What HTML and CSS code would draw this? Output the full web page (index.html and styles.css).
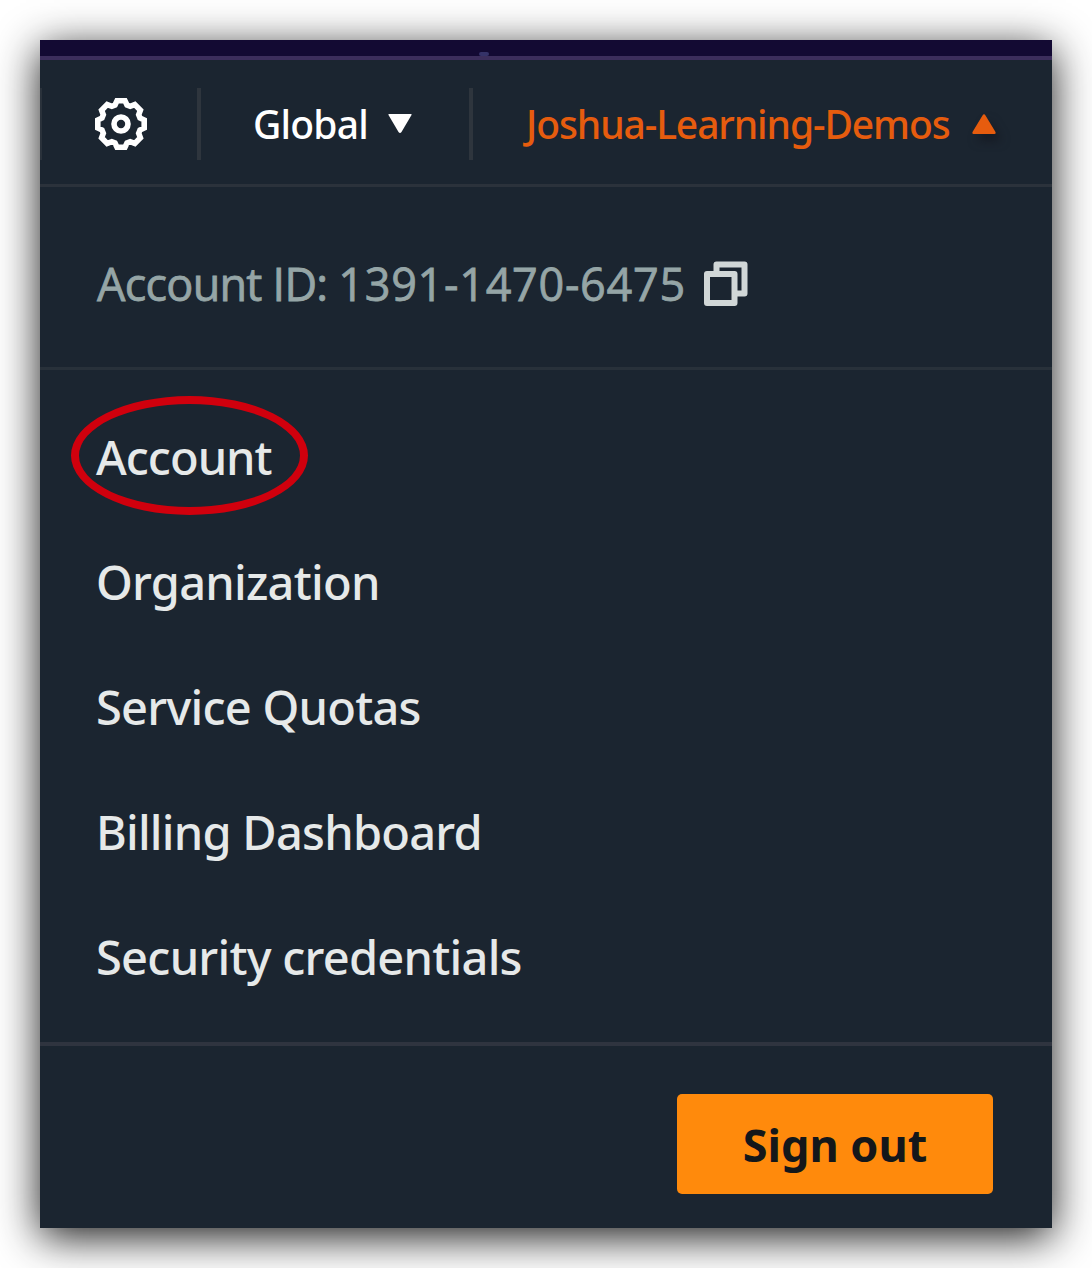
FILE: index.html
```html
<!DOCTYPE html>
<html lang="en">
<head>
<meta charset="utf-8">
<title>Account menu</title>
<link rel="stylesheet" href="styles.css">
</head>
<body>
<main class="panel">
  <div class="banner"><i class="star"></i></div>
  <header class="topbar">
    <button class="settings" aria-label="Settings">
      <svg width="54" height="54" viewBox="-27 -27 54 54" fill="none" stroke="#fff" stroke-width="5.6">
        <path d="M-4-23.2H4L6-19 9.2-17.7 13.8-19.4 19.4-13.8 17.7-9.2 19-6 23.2-4V4L19 6 17.7 9.2 19.4 13.8 13.8 19.4 9.2 17.7 6 19 4 23.2H-4L-6 19-9.2 17.7-13.8 19.4-19.4 13.8-17.7 9.2-19 6-23.2 4V-4L-19-6-17.7-9.2-19.4-13.8-13.8-19.4-9.2-17.7-6-19Z"/>
        <circle r="7"/>
      </svg>
    </button>
    <button class="region"><span class="region-name">Global</span>
      <svg width="24" height="20" viewBox="0 0 24 20"><path d="M1 0H23Q24 0 23.5 1L13.5 18Q12 20 10.500 18L.5 1Q0 0 1 0Z" fill="#fff"/></svg>
    </button>
    <button class="user"><span class="user-name">Joshua-Learning-Demos</span>
      <svg class="caret-up" width="24" height="20" viewBox="0 0 24 20"><path d="M1.500 20H22.500Q24 20 23.500 18L13.500 1.500Q12-1 10.500 1.500L.5 18Q0 20 1.500 20Z" fill="#e65c0e"/></svg>
    </button>
  </header>
  <section class="account-id">
    <span class="id-text">Account ID: <span class="id-number">1391-1470-6475</span></span>
    <svg width="46" height="48" viewBox="0 0 46 48" fill="none" stroke="#d1d7d7" stroke-width="6" stroke-linejoin="round"><path d="M4 14H31.500V43H4ZM13.500 14V4.500H41.500V33.500H31.500"/></svg>
  </section>
  <nav class="menu">
    <a class="item marked">Account</a>
    <a class="item">Organization</a>
    <a class="item">Service Quotas</a>
    <a class="item">Billing Dashboard</a>
    <a class="item">Security credentials</a>
  </nav>
  <footer class="footer"><button class="signout">Sign out</button></footer>
</main>
</body>
</html>
```
FILE: styles.css
```css
*, *::before { box-sizing: border-box; }
body {
  margin: 0;
  padding: 40px;
  height: 1268px;
  overflow: hidden;
  background: #fff;
  font-family: "Noto Sans", "Open Sans", sans-serif;
}
button {
  border: 0;
  padding: 0;
  margin: 0;
  background: none;
  font: inherit;
  color: inherit;
}
svg { display: block; flex: none; }
span { white-space: nowrap; }
.panel {
  width: 1012px;
  height: 1188px;
  display: flex;
  flex-direction: column;
  background: #1b2530;
  box-shadow: 0 9px 40px rgba(0, 0, 0, .9);
}
.banner {
  height: 20px;
  padding: 12px 0 0 439px;
  background: #130a33;
  border-bottom: 4px solid #3c2e5c;
}
.star {
  display: block;
  width: 10px;
  height: 4px;
  border-radius: 2px;
  background: #353268;
}
.topbar {
  height: 127px;
  padding-top: 4px;
  display: flex;
  align-items: center;
  border-bottom: 3px solid #2b323b;
  font-size: 39px;
  line-height: 48px;
  color: #fff;
}
.settings, .region {
  height: 72px;
  display: flex;
  align-items: center;
  border-right: 4px solid #2e353d;
}
.settings {
  width: 161px;
  padding-left: 52px;
  border-left: 2px solid #2a323b;
}
.region {
  width: 272px;
  padding-left: 52px;
  gap: 21px;
  font-weight: 500;
}
.region-name { width: 114px; letter-spacing: -.8px; text-align: left; }
.user {
  display: flex;
  align-items: center;
  padding-left: 53px;
  gap: 20px;
  font-weight: 500;
  color: #e65c0e;
}
.user-name { width: 426px; letter-spacing: -1.1px; text-align: left; }
.caret-up { filter: drop-shadow(5px 7px 5px rgba(20, 24, 32, .8)); }
.account-id {
  height: 183px;
  padding: 14px 0 0 57px;
  display: flex;
  align-items: center;
  gap: 16px;
  border-bottom: 3px solid #28313a;
  font-family: "Open Sans", "Noto Sans", sans-serif;
  font-size: 45px;
  line-height: 60px;
  color: #95a5a6;
}
.id-text {
  width: 590px;
  letter-spacing: -.75px;
  -webkit-text-stroke: .8px currentColor;
}
.id-number { letter-spacing: .7px; }
.menu {
  height: 676px;
  padding-top: 24px;
  border-bottom: 4px solid #2f343f;
  font-size: 47px;
  font-weight: 500;
  color: #e6e9e9;
}
.item {
  position: relative;
  height: 125px;
  padding-left: 56px;
  display: flex;
  align-items: center;
  letter-spacing: -.75px;
}
.marked { letter-spacing: -1px; }
.marked::before {
  content: "";
  position: absolute;
  left: 31px;
  top: 2px;
  width: 237px;
  height: 119px;
  border: 8px solid #d0000d;
  border-radius: 50%;
}
.footer {
  flex: 1;
  display: flex;
  justify-content: flex-end;
  padding: 48px 59px 0 0;
}
.signout {
  width: 316px;
  height: 100px;
  border-radius: 5px;
  background: #ff8a0c;
  color: #14171a;
  font-size: 45px;
  font-weight: 700;
}
```
